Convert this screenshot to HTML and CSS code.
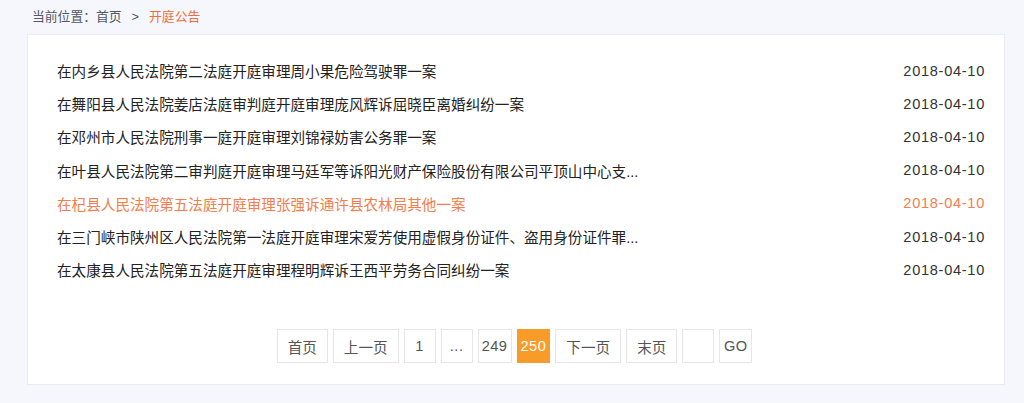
FILE: index.html
```
<!DOCTYPE html>
<html lang="zh-CN">
<head>
    <meta charset="UTF-8">
    <title>开庭公告</title>
    <link rel="stylesheet" href="styles.css">
</head>
<body>
    <div class="page">
        <div class="crumb">
            当前位置：<a href="#">首页</a><span class="sep">&gt;</span><span class="current">开庭公告</span>
        </div>

        <div class="card">
            <ul class="notice-list">
                <li class="notice"><a href="#" class="title">在内乡县人民法院第二法庭开庭审理周小果危险驾驶罪一案</a><span class="date">2018-04-10</span></li>
                <li class="notice"><a href="#" class="title">在舞阳县人民法院姜店法庭审判庭开庭审理庞风辉诉屈晓臣离婚纠纷一案</a><span class="date">2018-04-10</span></li>
                <li class="notice"><a href="#" class="title">在邓州市人民法院刑事一庭开庭审理刘锦禄妨害公务罪一案</a><span class="date">2018-04-10</span></li>
                <li class="notice"><a href="#" class="title">在叶县人民法院第二审判庭开庭审理马廷军等诉阳光财产保险股份有限公司平顶山中心支...</a><span class="date">2018-04-10</span></li>
                <li class="notice active"><a href="#" class="title">在杞县人民法院第五法庭开庭审理张强诉通许县农林局其他一案</a><span class="date">2018-04-10</span></li>
                <li class="notice"><a href="#" class="title">在三门峡市陕州区人民法院第一法庭开庭审理宋爱芳使用虚假身份证件、盗用身份证件罪...</a><span class="date">2018-04-10</span></li>
                <li class="notice"><a href="#" class="title">在太康县人民法院第五法庭开庭审理程明辉诉王西平劳务合同纠纷一案</a><span class="date">2018-04-10</span></li>
            </ul>

            <div class="pager">
                <a href="#" class="pg">首页</a>
                <a href="#" class="pg">上一页</a>
                <a href="#" class="pg num">1</a>
                <span class="pg num">...</span>
                <a href="#" class="pg num">249</a>
                <span class="pg num on">250</span>
                <a href="#" class="pg">下一页</a>
                <a href="#" class="pg">末页</a>
                <input type="text" class="pg-input">
                <button class="pg num go">GO</button>
            </div>
        </div>
    </div>
</body>
</html>
```
FILE: styles.css
```
* {
    margin: 0;
    padding: 0;
    box-sizing: border-box;
}

body {
    background-color: #f5f7fc;
    font-family: "Liberation Sans", "Noto Sans CJK SC", sans-serif;
    color: #222;
}

a {
    text-decoration: none;
    color: inherit;
}

.page {
    padding: 0 19px 0 27px;
}

/* breadcrumb */
.crumb {
    height: 34px;
    line-height: 34px;
    padding-left: 5px;
    font-size: 12.8px;
    color: #4f5966;
}

.crumb .sep {
    margin: 0 10px;
}

.crumb .current {
    color: #f26d3d;
}

/* list card */
.card {
    background-color: #fff;
    border: 1px solid #ebebeb;
    padding: 19px 19px 21px 20px;
}

.notice-list {
    list-style: none;
    padding-left: 9px;
}

.notice {
    display: flex;
    justify-content: space-between;
    align-items: center;
    height: 33.2px;
    font-size: 14.6px;
}

.notice .title {
    color: #222;
    white-space: nowrap;
}

.notice .date {
    color: #333;
    letter-spacing: 0.7px;
}

.notice.active .title,
.notice.active .date {
    color: #f47d4b;
}

/* pagination */
.pager {
    display: flex;
    justify-content: center;
    gap: 5px;
    margin-top: 43px;
    padding-right: 4px;
}

.pg {
    display: flex;
    align-items: center;
    justify-content: center;
    height: 34px;
    padding: 0 10px;
    border: 1px solid #e6e6e6;
    background-color: #fff;
    color: #555;
    font-family: inherit;
    font-size: 14.6px;
}

.pg.num {
    min-width: 32px;
    padding: 0 3px;
    letter-spacing: 0.5px;
}

.pg.on {
    background-color: #f99b28;
    border-color: #f99b28;
    color: #fff;
}

.pg.go {
    min-width: 33px;
    cursor: pointer;
}

.pg-input {
    width: 32px;
    height: 34px;
    border: 1px solid #e6e6e6;
    background-color: #fff;
    outline: none;
}
```
